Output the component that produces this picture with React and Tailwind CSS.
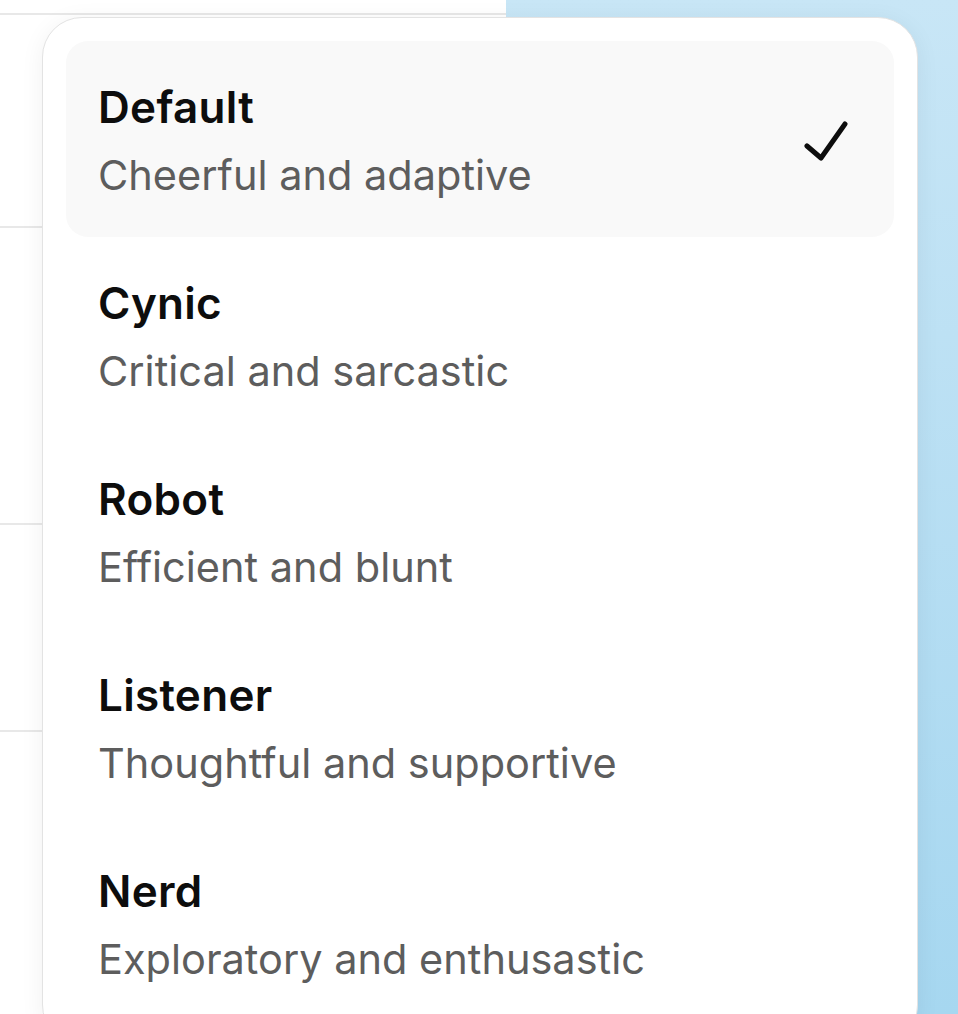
import React from 'react';

const personalities = [
  { name: 'Default', desc: 'Cheerful and adaptive', selected: true },
  { name: 'Cynic', desc: 'Critical and sarcastic' },
  { name: 'Robot', desc: 'Efficient and blunt' },
  { name: 'Listener', desc: 'Thoughtful and supportive' },
  { name: 'Nerd', desc: 'Exploratory and enthusastic' },
];

const CheckMark = () => (
  <svg width="44" height="42" viewBox="0 0 44 42" fill="none" className="shrink-0">
    <path
      d="M3 26 L17 38 L41 4"
      stroke="#0d0d0d"
      strokeWidth="5"
      strokeLinecap="round"
      strokeLinejoin="round"
    />
  </svg>
);

const PersonalityItem = ({ item }) => (
  <div
    className={`flex items-center justify-between rounded-[22px] pl-[32px] pr-[46px] pt-[41px] pb-[37px] ${
      item.selected ? 'bg-[#f9f9f9]' : ''
    }`}
  >
    <div className="flex flex-col">
      <span className="text-[44px] leading-[51px] font-semibold tracking-[0.3px] text-[#0d0d0d]">
        {item.name}
      </span>
      <span className="mt-[17px] text-[41.5px] leading-[50px] text-[#5d5d5d]">
        {item.desc}
      </span>
    </div>
    {item.selected && <CheckMark />}
  </div>
);

export default function App() {
  return (
    <div className="relative h-[1014px] w-[958px] overflow-hidden font-['Inter','Noto_Sans',sans-serif]">
      {/* Background: settings list on the left, wallpaper on the right */}
      <div className="flex h-full">
        <div className="flex w-[506px] flex-col bg-white">
          <div className="h-[15px] border-b-2 border-[#e8e8e8]" />
          <div className="h-[213px] border-b-2 border-[#e8e8e8]" />
          <div className="h-[297px] border-b-2 border-[#e8e8e8]" />
          <div className="h-[207px] border-b-2 border-[#e8e8e8]" />
          <div className="flex-1" />
        </div>
        <div className="flex-1 bg-gradient-to-b from-[#c8e6f6] to-[#a6d7f0]" />
      </div>

      {/* Dropdown menu */}
      <div className="absolute left-[42px] top-[17px] w-[876px] rounded-[40px] border border-[#e3e3e3] bg-white p-[23px] shadow-[0_4px_24px_rgba(0,0,0,0.06)]">
        {personalities.map((item) => (
          <PersonalityItem key={item.name} item={item} />
        ))}
      </div>
    </div>
  );
}
